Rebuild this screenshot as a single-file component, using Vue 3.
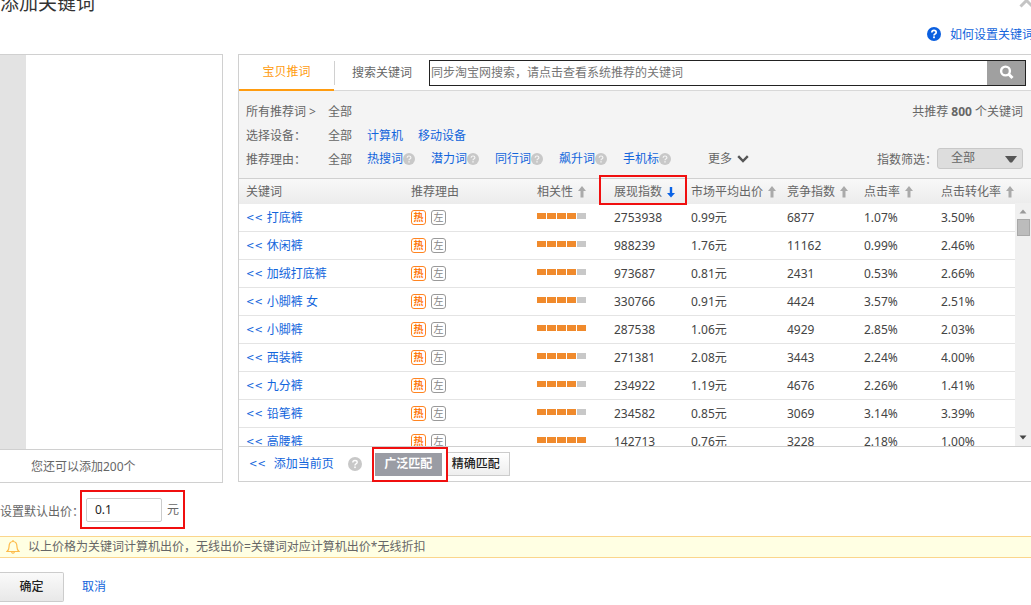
<script setup>
import { ref } from 'vue'

const keyword = ref('')
const price = ref('0.1')
const level = ref('全部')

const reasons = ['热搜词', '潜力词', '同行词', '飙升词', '手机标']

const columns = [
  { key: 'word', label: '关键词' },
  { key: 'reason', label: '推荐理由' },
  { key: 'rel', label: '相关性', sort: 'up' },
  { key: 'show', label: '展现指数', sort: 'down' },
  { key: 'price', label: '市场平均出价', sort: 'up' },
  { key: 'rival', label: '竞争指数', sort: 'up' },
  { key: 'ctr', label: '点击率', sort: 'up' },
  { key: 'cvr', label: '点击转化率', sort: 'up' },
]

const rows = [
  { word: '打底裤', rel: 4, show: '2753938', price: '0.99元', rival: '6877', ctr: '1.07%', cvr: '3.50%' },
  { word: '休闲裤', rel: 4, show: '988239', price: '1.76元', rival: '11162', ctr: '0.99%', cvr: '2.46%' },
  { word: '加绒打底裤', rel: 4, show: '973687', price: '0.81元', rival: '2431', ctr: '0.53%', cvr: '2.66%' },
  { word: '小脚裤 女', rel: 4, show: '330766', price: '0.91元', rival: '4424', ctr: '3.57%', cvr: '2.51%' },
  { word: '小脚裤', rel: 5, show: '287538', price: '1.06元', rival: '4929', ctr: '2.85%', cvr: '2.03%' },
  { word: '西装裤', rel: 4, show: '271381', price: '2.08元', rival: '3443', ctr: '2.24%', cvr: '4.00%' },
  { word: '九分裤', rel: 4, show: '234922', price: '1.19元', rival: '4676', ctr: '2.26%', cvr: '1.41%' },
  { word: '铅笔裤', rel: 4, show: '234582', price: '0.85元', rival: '3069', ctr: '3.14%', cvr: '3.39%' },
  { word: '高腰裤', rel: 5, show: '142713', price: '0.76元', rival: '3228', ctr: '2.18%', cvr: '1.00%' },
]
</script>

<template>
  <div class="dialog">
    <header class="head">
      <h1>添加关键词</h1>
      <button class="close" type="button" aria-label="关闭">
        <svg width="14" height="8" viewBox="0 0 14 8"><path d="M1.500 6.500L7.500 .5L13.500 6.500" fill="none" stroke="#c4c4c4" stroke-width="3" /></svg>
      </button>
    </header>

    <div class="help">
      <svg width="14" height="14" viewBox="0 0 14 14">
        <circle cx="7" cy="7" r="7" fill="#0a5fe0" />
        <path d="M4.800 5.500Q4.900 3.300 7 3.300T9.200 5.200Q9.200 6.300 8 6.900Q7 7.400 7 8.400" fill="none" stroke="#fff" stroke-width="1.700" />
        <rect x="6.100" y="9.400" width="1.800" height="1.800" fill="#fff" />
      </svg>
      <a href="#">如何设置关键词</a>
    </div>

    <main class="panels">
      <section class="chosen">
        <div class="chosen-body"><div class="strip"></div></div>
        <p class="chosen-foot">您还可以添加200个</p>
      </section>

      <section class="picker">
        <div class="bar">
          <nav class="tabs">
            <button type="button" class="tab active">宝贝推词</button>
            <button type="button" class="tab">搜索关键词</button>
          </nav>
          <form class="search" @submit.prevent>
            <input v-model="keyword" type="text" aria-label="搜索关键词" placeholder="同步淘宝网搜索，请点击查看系统推荐的关键词" />
            <button type="submit" aria-label="搜索">
              <svg width="15" height="15" viewBox="0 0 15 15">
                <circle cx="6.500" cy="6" r="4.400" fill="none" stroke="#fff" stroke-width="2.400" />
                <path d="M9.500 9L13.500 13" stroke="#fff" stroke-width="3" />
              </svg>
            </button>
          </form>
        </div>

        <div class="filters">
          <div class="line">
            <span class="name">所有推荐词 &gt;</span>
            <span>全部</span>
            <span class="total">共推荐 <b>800</b> 个关键词</span>
          </div>
          <div class="line">
            <span class="name">选择设备：</span>
            <span class="all">全部</span>
            <a class="device" href="#">计算机</a>
            <a class="device" href="#">移动设备</a>
          </div>
          <div class="line">
            <span class="name">推荐理由：</span>
            <span class="all">全部</span>
            <span v-for="r in reasons" :key="r" class="reason">
              <a href="#">{{ r }}</a>
              <svg width="12" height="12" viewBox="0 0 14 14">
                <circle cx="7" cy="7" r="7" fill="#c8c8c8" />
                <path d="M4.800 5.500Q4.900 3.500 7 3.500T9.200 5.200Q9.200 6.300 8 6.900Q7 7.400 7 8.400" fill="none" stroke="#f4f4f4" stroke-width="1.400" />
                <rect x="6.200" y="9.500" width="1.600" height="1.600" fill="#f4f4f4" />
              </svg>
            </span>
            <button type="button" class="more">
              更多
              <svg width="12" height="8" viewBox="0 0 12 8"><path d="M1.200 1.200L6 6L10.800 1.200" fill="none" stroke="#555" stroke-width="2.400" /></svg>
            </button>
            <span class="level">
              <label for="level">指数筛选：</label>
              <span class="drop">
                <select id="level" v-model="level"><option>全部</option></select>
                <svg width="12" height="7" viewBox="0 0 12 7"><path d="M0 0H12L7 6.500H5Z" fill="#555" /></svg>
              </span>
            </span>
          </div>
        </div>

        <div class="list">
          <table>
            <colgroup><col v-for="c in columns" :key="c.key" :class="'c-' + c.key" /></colgroup>
            <thead>
              <tr>
                <th v-for="c in columns" :key="c.key" scope="col" :class="{ marked: c.sort === 'down' }">
                  {{ c.label }}<svg v-if="c.sort" class="sort" width="8" height="12" viewBox="0 0 8 12">
                    <path v-if="c.sort === 'up'" d="M4 0L8 5H5.500V11.500H2.500V5H0Z" fill="#aaa" />
                    <path v-else d="M2.800 1H5.200V7H8L4 11.500L0 7H2.800Z" fill="#0a63e6" />
                  </svg>
                </th>
              </tr>
            </thead>
            <tbody>
              <tr v-for="row in rows" :key="row.word">
                <td><a href="#" class="word"><span class="arrows">&lt;&lt;</span><span>{{ row.word }}</span></a></td>
                <td><span class="tags"><span class="tag hot">热</span><span class="tag">左</span></span></td>
                <td><span class="meter"><i v-for="n in 5" :key="n" :class="{ on: n <= row.rel }"></i></span></td>
                <td>{{ row.show }}</td>
                <td>{{ row.price }}</td>
                <td>{{ row.rival }}</td>
                <td>{{ row.ctr }}</td>
                <td>{{ row.cvr }}</td>
              </tr>
            </tbody>
          </table>
          <div class="scroll" aria-hidden="true">
            <svg width="8" height="5" viewBox="0 0 8 5"><path d="M4 .5L7.500 4.500H.5Z" fill="#999" /></svg>
            <span class="thumb"></span>
            <svg class="down" width="8" height="5" viewBox="0 0 8 5"><path d="M.5 .5H7.500L4 4.500Z" fill="#444" /></svg>
          </div>
        </div>

        <footer class="actions">
          <a href="#" class="add"><span class="arrows">&lt;&lt;</span><span>添加当前页</span></a>
          <svg width="14" height="14" viewBox="0 0 14 14">
            <circle cx="7" cy="7" r="7" fill="#c8c8c8" />
            <path d="M4.800 5.500Q4.900 3.500 7 3.500T9.200 5.200Q9.200 6.300 8 6.900Q7 7.400 7 8.400" fill="none" stroke="#fff" stroke-width="1.400" />
            <rect x="6.200" y="9.500" width="1.600" height="1.600" fill="#fff" />
          </svg>
          <span class="match-mark"><button type="button" class="match on">广泛匹配</button></span>
          <button type="button" class="match">精确匹配</button>
        </footer>
      </section>
    </main>

    <div class="price">
      <label for="price">设置默认出价：</label>
      <span class="price-mark"><input id="price" v-model="price" type="text" />元</span>
    </div>

    <p class="notice">
      <svg width="14" height="16" viewBox="0 0 14 16">
        <path d="M7 1V2.500M1 12.500H13Q11 11 11 8Q11 2.500 7 2.500T3 8Q3 11 1 12.500ZM5.500 13Q7 15.500 8.500 13" fill="none" stroke="#fdbb4a" stroke-width="1.200" />
      </svg>
      以上价格为关键词计算机出价，无线出价=关键词对应计算机出价*无线折扣
    </p>

    <div class="submit">
      <button type="button" class="ok">确定</button>
      <a href="#">取消</a>
    </div>
  </div>
</template>

<style>
body { background: #fff; overflow: hidden; }
</style>

<style scoped>
.dialog, .dialog * { box-sizing: border-box; }
.dialog {
  font: 12px/16px "Noto Sans", "Noto Sans CJK SC", sans-serif;
  color: #666;
  overflow: hidden;
}
button, input, select { font: inherit; color: inherit; margin: 0; padding: 0; border: 0; background: none; border-radius: 0; }
button { white-space: nowrap; }
a { color: #1265dc; text-decoration: none; white-space: nowrap; }
svg { display: block; flex: none; }

.head { display: flex; justify-content: space-between; align-items: flex-start; height: 24px; }
h1 { margin: -8px 0 0; font-size: 19px; line-height: 22px; font-weight: 400; color: #333; }
.close { margin-right: -2px; }

.help { display: flex; justify-content: flex-end; align-items: center; gap: 9px; height: 20px; margin-right: -3px; }
.help a { padding-top: 2px; }

.panels { display: flex; gap: 15px; align-items: flex-start; margin-top: 10px; }
.chosen { flex: 0 0 223px; border: 1px solid #d0d0d0; border-left: 0; }
.chosen-body { display: flex; height: 394px; }
.strip { width: 26px; background: #e3e3e3; }
.chosen-foot { margin: 0; padding: 9px 31px 7px; border-top: 1px solid #d0d0d0; }

.picker { flex: 1; min-width: 0; border: 1px solid #d0d0d0; border-right: 0; }
.bar { display: flex; align-items: center; height: 36px; padding-right: 5px; border-bottom: 1px solid #d8d8d8; }
.tabs { display: flex; align-self: stretch; align-items: center; }
.tab { width: 95px; height: 24px; border-left: 1px solid #d0d0d0; }
.tab.active { height: 36px; margin-bottom: -1px; border-left: 0; border-bottom: 2px solid #ff9c10; color: #ff9c10; }
.search { flex: 1; display: flex; height: 26px; border: 1px solid #222; }
.search input { flex: 1; min-width: 0; padding: 0 1px; outline: 0; }
.search input::placeholder { color: #757575; opacity: 1; }
.search button { display: grid; place-items: center; width: 38px; background: #a0a0a0; }

.filters { padding: 9px 8px 6px 7px; background: #f4f4f4; }
.line { display: flex; align-items: center; height: 24px; white-space: nowrap; }
.name { width: 82px; }
.all { width: 39px; }
.device { margin-right: 15px; }
.total, .level { margin-left: auto; }
.reason { display: flex; align-items: center; margin-right: 16px; padding-bottom: 3px; }
.more { display: flex; align-items: center; gap: 5px; margin-left: 21px; padding-bottom: 3px; }
.level { display: flex; align-items: center; }
.drop { position: relative; padding-bottom: 4px; }
.drop select { display: block; appearance: none; width: 86px; height: 21px; padding: 0 13px; border: 1px solid #c8c8c8; border-radius: 3px; background: #ddd; }
.drop svg { position: absolute; right: 6px; top: 8px; pointer-events: none; }

.list { position: relative; height: 268px; clip-path: inset(-8px 0 0 0); }
table { width: 100%; table-layout: fixed; border-collapse: separate; border-spacing: 0; }
.c-word { width: 165px; }
.c-reason { width: 126px; }
.c-rel, .c-show, .c-rival, .c-ctr { width: 77px; }
.c-price { width: 96px; }
.c-cvr { width: 97px; }
th, td { padding: 0 0 0 7px; text-align: left; white-space: nowrap; }
th { height: 26px; font-weight: 400; border-top: 1px solid #d0d0d0; background: linear-gradient(#f8f8f8, #ececec); }
td { height: 28px; color: #444; border-bottom: 1px solid #e4e4e4; }
.sort { display: inline-block; margin-left: 5px; vertical-align: -2px; }
.marked { position: relative; }
.marked::after { content: ""; position: absolute; inset: -4px -3px -1px -8px; border: 2px solid #f00f0f; z-index: 1; }
.arrows { font-family: "DejaVu Sans", sans-serif; font-size: 10px; }
.word { display: flex; gap: 4px; }
.tags { display: flex; gap: 5px; }
.tag { width: 15px; height: 15px; border: 1px solid #999; border-radius: 3px; font-size: 10px; line-height: 12px; text-align: center; color: #888; }
.tag.hot { border-color: #ff8420; color: #ff7a10; font-weight: 700; }
.meter { display: flex; gap: 1px; margin-bottom: 4px; }
.meter i { width: 9px; height: 6px; background: #c8c8c8; }
.meter i.on { background: #f08a2c; }
.scroll { position: absolute; top: 25px; right: 0; bottom: 0; width: 16px; display: flex; flex-direction: column; align-items: center; gap: 5px; padding: 6px 0; background: #f0f0f0; }
.thumb { width: 13px; height: 17px; border: 1px solid #a8a8a8; background: #bcbcbc; }
.scroll .down { margin-top: auto; }

.actions { display: flex; align-items: center; height: 35px; padding-left: 10px; border-top: 1px solid #d0d0d0; }
.add { display: flex; gap: 8px; margin-right: 14px; }
.match-mark { margin-left: 10px; padding: 4px 4px 4px 1px; border: 2px solid #f00f0f; }
.match { height: 24px; padding: 0 7px; border: 1px solid #ccc; background: linear-gradient(#fff, #eee); color: #222; font-weight: 500; }
.match-mark + .match { padding: 0 9px 0 4px; border-left: 0; }
.match.on { display: block; height: 23px; width: 67px; border: 0; background: #9a9ca4; color: #fff; font-weight: 700; }

.price { display: flex; align-items: center; height: 39px; margin-top: 7px; white-space: nowrap; }
.price label { width: 80px; margin-top: 4px; }
.price-mark { display: flex; align-items: center; gap: 5px; width: 105px; height: 39px; padding-left: 4px; border: 2px solid #f00f0f; }
.price-mark input { width: 76px; height: 24px; padding: 0 8px; border: 1px solid #ccc; border-radius: 2px; color: #222; }

.notice { display: flex; align-items: center; gap: 8px; height: 22px; margin: 7px 0 14px; padding-left: 6px; border: solid #fbd68c; border-width: 1px 0; background: #ffffe3; white-space: nowrap; }
.submit { display: flex; align-items: center; gap: 18px; }
.ok { width: 64px; height: 30px; border: 1px solid #ccc; border-left: 0; border-radius: 0 2px 2px 0; background: linear-gradient(#fafafa, #e8e8e8); color: #222; font-weight: 500; }
</style>
